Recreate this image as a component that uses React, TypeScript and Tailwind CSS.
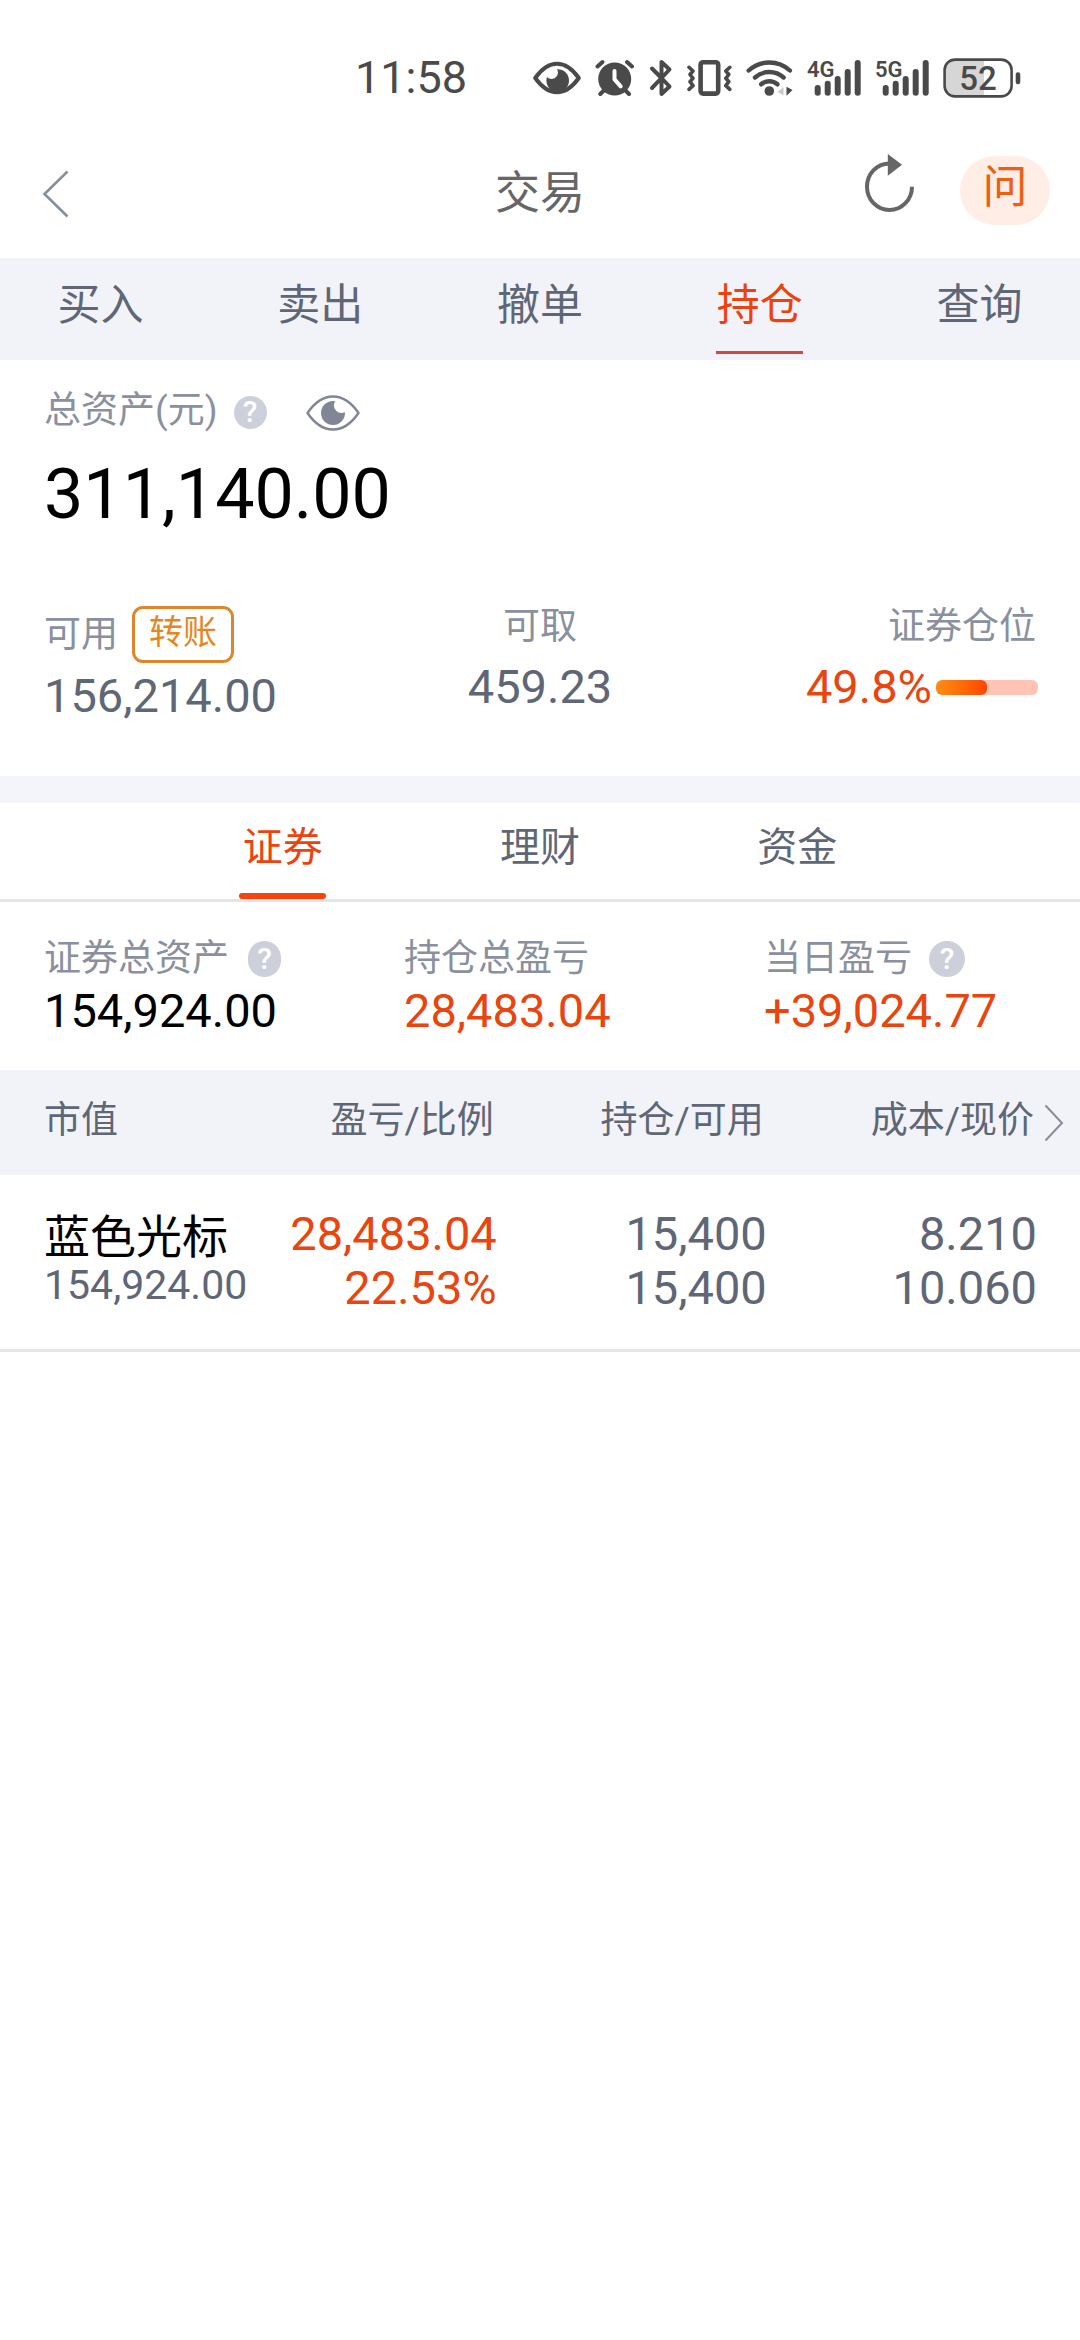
import React, { useState } from 'react';
import clsx from 'clsx';

const MAIN_TABS = ['买入', '卖出', '撤单', '持仓', '查询'];
const ASSET_TABS = ['证券', '理财', '资金'];

const HOLDINGS = [
  {
    name: '蓝色光标',
    marketValue: '154,924.00',
    profit: '28,483.04',
    ratio: '22.53%',
    amount: '15,400',
    available: '15,400',
    cost: '8.210',
    price: '10.060',
  },
];

function SignalIcon({ label }: { label: string }) {
  return (
    <svg width="54" height="40" viewBox="0 0 54 40" fill="none" stroke="#4a4a4a" strokeWidth="6" strokeLinecap="round">
      <text x="0" y="19" fontSize="22" fontWeight="600" fill="#4a4a4a" stroke="none">{label}</text>
      <path d="M10.7 30v4.7M20.7 25.7v9M30.7 21v13.7M40.7 14v20.7M50.7 5v29.7" />
    </svg>
  );
}

function StatusBar() {
  return (
    <div className="flex h-[126px] items-center justify-end pt-[30px] pr-[59px] text-[#4a4a4a]">
      <span className="mr-[66px] text-[45px] leading-[54px]">11:58</span>
      <div className="flex items-center gap-[14px]">
        <svg width="48" height="40" viewBox="0 0 48 40" fill="none">
          <circle cx="24.7" cy="22.5" r="11.3" fill="#4a4a4a" />
          <circle cx="18.5" cy="14.5" r="6.5" fill="#fff" />
          <path d="M2.2 20C9 10.5 16 5.8 24 5.8S39 10.5 45.8 20C39 29.5 32 34.2 24 34.2S9 29.5 2.2 20z" stroke="#4a4a4a" strokeWidth="4" strokeLinejoin="round" />
        </svg>
        <svg width="40" height="40" viewBox="0 0 40 40" fill="none" strokeLinecap="round">
          <circle cx="19.7" cy="21" r="16.5" fill="#4a4a4a" />
          <path d="M2.5 8.5l5-4.5M37 8.5L32 4M5.3 36l5-5M34 36l-5-5" stroke="#4a4a4a" strokeWidth="4" />
          <path d="M19.5 13v8.3l6.2 7" stroke="#fff" strokeWidth="4" strokeLinejoin="round" />
        </svg>
        <svg width="24" height="40" viewBox="0 0 24 40" fill="none" stroke="#4a4a4a" strokeWidth="4" strokeLinecap="round" strokeLinejoin="round">
          <path d="M3 10.5l9.5 9.5 8 8.5-8 7.5V4l8 7.5-8 8.5L3 30" />
        </svg>
        <svg width="45" height="40" viewBox="0 0 45 40" fill="none" stroke="#4a4a4a" strokeLinecap="round" strokeLinejoin="round">
          <rect x="13.6" y="4.2" width="17.6" height="31.4" rx="2.5" strokeWidth="4.6" />
          <path d="M2 9.3L6 13l-3 3.5 3 3.8-3 3.4 3 4-4 3.6M42.8 9.3l-4 3.7 3 3.5-3 3.8 3 3.4-3 4 4 3.6" strokeWidth="3.6" />
        </svg>
        <svg width="47" height="40" viewBox="0 0 47 40" fill="none" stroke="#4a4a4a" strokeWidth="4.4" strokeLinecap="round">
          <path d="M2.7 12.5a30.5 30.5 0 0 1 41.2 0M9 19.5a21.5 21.5 0 0 1 28.6 0M15.2 26.3a12.5 12.5 0 0 1 16.2 0" />
          <circle cx="23.3" cy="33" r="4.8" fill="#4a4a4a" stroke="none" />
          <path d="M31.7 33.7l5.8-4.4v8.2z" fill="#c8c8c8" stroke="none" />
          <path d="M40.5 28.7v9l6-5.7z" fill="#4a4a4a" stroke="none" />
        </svg>
        <SignalIcon label="4G" />
        <SignalIcon label="5G" />
        <svg width="78" height="40" viewBox="0 0 78 40" fill="none">
          <path d="M41 1.6H12A10.4 10.4 0 0 0 1.6 12v16A10.4 10.4 0 0 0 12 38.4h29z" fill="#d6d6d6" />
          <rect x="1.6" y="1.6" width="67" height="36.8" rx="10.4" stroke="#4a4a4a" strokeWidth="2.6" />
          <rect x="72.7" y="14.3" width="4.6" height="12" rx="2.3" fill="#4a4a4a" />
          <text x="35" y="32" textAnchor="middle" fontSize="33" fontWeight="500" fill="#4a4a4a">52</text>
        </svg>
      </div>
    </div>
  );
}

function HelpButton({ className }: { className: string }) {
  return (
    <button
      aria-label="说明"
      className={clsx('flex shrink-0 items-center justify-center rounded-full bg-[#cbd0da] text-[30px] leading-none font-medium text-white', className)}
    >
      ?
    </button>
  );
}

export default function App() {
  const [mainTab, setMainTab] = useState('持仓');
  const [assetTab, setAssetTab] = useState('证券');
  const [hidden, setHidden] = useState(false);

  return (
    <div className="min-h-screen bg-white font-['Roboto','Noto_Sans_CJK_SC',sans-serif] text-[#5f6675]">
      <StatusBar />

      <header className="grid h-[132px] grid-cols-[1fr_auto_1fr] items-center px-[30px]">
        <button aria-label="返回" className="justify-self-start pt-1 pl-3">
          <svg width="27" height="48" viewBox="0 0 27 48" fill="none" stroke="#87919b" strokeWidth="2.6">
            <path d="M25.5 1.5L2.5 24l23 22.5" />
          </svg>
        </button>
        <h1 className="pt-1 text-[45px] leading-[54px] text-[#666666]">交易</h1>
        <div className="flex items-start gap-[45px] justify-self-end">
          <button aria-label="刷新">
            <svg width="50" height="76" viewBox="0 0 50 76" fill="none">
              <path d="M47 32.7A22.5 23.3 0 1 1 24.5 9.4" stroke="#666" strokeWidth="4" />
              <path d="M22.8 0L37 10.7 22.8 21.7z" fill="#666" />
            </svg>
          </button>
          <button className="mt-[2px] h-[69px] w-[90px] rounded-full bg-[#ffede6] pb-[6px] text-[45px] leading-[60px] text-[#ec600f]">问</button>
        </div>
      </header>

      <nav className="flex justify-between bg-[#f2f3f8] px-[57px] pt-[2px] pb-[6px]">
        {MAIN_TABS.map((tab) => (
          <button key={tab} onClick={() => setMainTab(tab)} className="flex w-[87px] flex-col items-center">
            <span className={clsx('text-[43px] leading-[91px]', tab === mainTab && 'text-[#ee420e]')}>{tab}</span>
            <span className={clsx('h-[3px] w-full', tab === mainTab && 'bg-[#d0484a]')} />
          </button>
        ))}
      </nav>

      <section className="px-[44px] pt-6 pb-[53px]">
        <div className="flex h-[54px] items-center text-[#8a909e]">
          <h2 className="text-[37px]">总资产(元)</h2>
          <HelpButton className="mt-[2px] ml-4 size-[33px]" />
          <button aria-label="显示或隐藏金额" onClick={() => setHidden(!hidden)} className="mt-1 ml-[39px]">
            <svg width="54" height="36" viewBox="0 0 54 36" fill="none">
              <circle cx="27" cy="18" r="12" fill="#808695" />
              <circle cx="35.5" cy="10.5" r="7.6" fill="#fff" />
              <path d="M1.5 18C9 7 17.5 1.5 27 1.5S45 7 52.5 18C45 29 36.5 34.5 27 34.5S9 29 1.5 18z" stroke="#808695" strokeWidth="2.4" strokeLinejoin="round" />
            </svg>
          </button>
        </div>
        <p className="mt-[14px] text-[70px] leading-[84px] text-black">{hidden ? '****' : '311,140.00'}</p>

        <div className="mt-16 grid grid-cols-3 text-[47px] leading-[54px]">
          <div className="flex flex-col gap-[6px] pt-[6px]">
            <div className="flex items-center gap-[14px]">
              <span className="text-[37px] text-[#8a909e]">可用</span>
              <button className="h-[57px] w-[102px] rounded-[11px] border-3 border-[#de862e] pb-1 text-[34px] leading-[47px] text-[#e6861f]">转账</button>
            </div>
            <span>156,214.00</span>
          </div>
          <div className="flex flex-col items-center gap-[6px]">
            <span className="text-[37px] text-[#8a909e]">可取</span>
            <span>459.23</span>
          </div>
          <div className="flex flex-col items-end gap-[6px]">
            <span className="text-[37px] text-[#8a909e]">证券仓位</span>
            <div className="-mr-[2px] flex items-center gap-1">
              <span className="text-[#e8450f]">49.8%</span>
              <div className="h-[15px] w-[102px] overflow-hidden rounded-[6px] bg-[#ffc4b4]">
                <div className="h-full w-1/2 rounded-[6px] bg-linear-to-r from-[#ff8c12] to-[#ff4200]" />
              </div>
            </div>
          </div>
        </div>
      </section>

      <div className="h-[27px] bg-[#f4f5fa]" />

      <nav className="grid grid-cols-3 justify-items-center border-b-3 border-[#e4e7ea] px-[154px]">
        {ASSET_TABS.map((tab) => (
          <button key={tab} onClick={() => setAssetTab(tab)} className="flex w-[87px] flex-col items-center">
            <span className={clsx('text-[40px] leading-[90px]', tab === assetTab && 'text-[#ee420e]')}>{tab}</span>
            <span className={clsx('h-[6px] w-full rounded-full', tab === assetTab && 'bg-[#f8430a]')} />
          </button>
        ))}
      </nav>

      <section className="grid grid-cols-3 pt-[30px] pb-[34px] text-[47px] leading-[50px]">
        <div className="pl-[44px]">
          <div className="flex h-[54px] items-center text-[37px] text-[#8a909e]">
            证券总资产
            <HelpButton className="ml-[19px] h-[36px] w-[33px]" />
          </div>
          <p className="text-black">154,924.00</p>
        </div>
        <div className="pl-[44px]">
          <div className="flex h-[54px] items-center text-[37px] text-[#8a909e]">持仓总盈亏</div>
          <p className="text-[#e8450f]">28,483.04</p>
        </div>
        <div className="pl-[44px]">
          <div className="flex h-[54px] items-center text-[37px] text-[#8a909e]">
            当日盈亏
            <HelpButton className="ml-[17px] size-[36px]" />
          </div>
          <p className="text-[#e8450f]">+39,024.77</p>
        </div>
      </section>

      <table className="w-full table-fixed text-right">
        <colgroup>
          <col className="w-[24%]" />
          <col className="w-[22%]" />
          <col className="w-[25%]" />
          <col />
          <col className="w-[43px]" />
        </colgroup>
        <thead>
          <tr className="h-[105px] bg-[#f2f3f8] text-[37px]">
            <th className="pb-1 pl-[44px] text-left font-normal">市值</th>
            <th className="pr-[3px] pb-1 font-normal">盈亏/比例</th>
            <th className="pr-[3px] pb-1 font-normal">持仓/可用</th>
            <th className="pr-[3px] pb-1 font-normal">成本/现价</th>
            <th className="pl-[7px] text-left">
              <button aria-label="更多" className="block">
                <svg width="20" height="38" viewBox="0 0 20 38" fill="none" stroke="#878d9a" strokeWidth="2">
                  <path d="M1.5 1.5L18 19 1.5 36.5" />
                </svg>
              </button>
            </th>
          </tr>
        </thead>
        <tbody>
          {HOLDINGS.map((h) => (
            <tr key={h.name} className="border-b-3 border-[#e4e7ea] align-top text-[47px] leading-[54px]">
              <td className="pt-[38px] pl-[44px] text-left leading-[48px] whitespace-nowrap">
                <p className="text-[46px] text-black">{h.name}</p>
                <p className="text-[41px]">{h.marketValue}</p>
              </td>
              <td className="pt-8 pb-[34px] text-[#e8450f]">
                <p>{h.profit}</p>
                <p>{h.ratio}</p>
              </td>
              <td className="pt-8">
                <p>{h.amount}</p>
                <p>{h.available}</p>
              </td>
              <td className="pt-8">
                <p>{h.cost}</p>
                <p>{h.price}</p>
              </td>
              <td />
            </tr>
          ))}
        </tbody>
      </table>
    </div>
  );
}
